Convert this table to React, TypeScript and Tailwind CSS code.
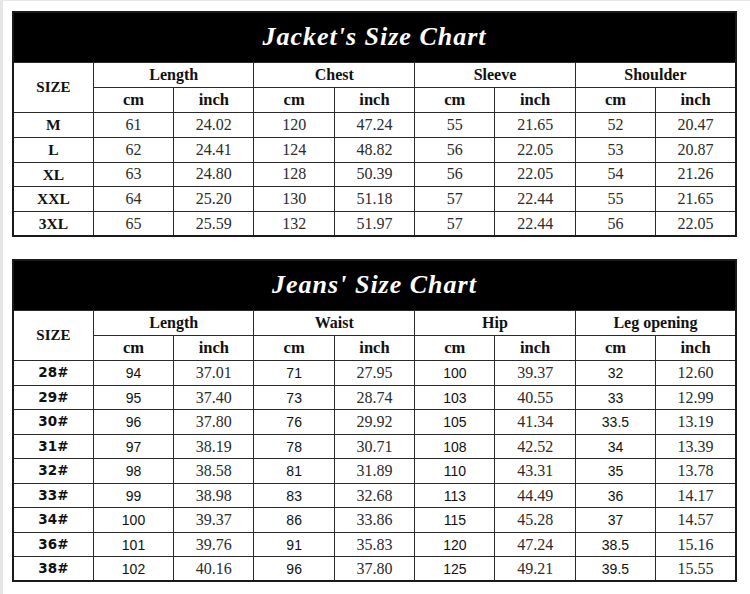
const jacketGroups = ["Length", "Chest", "Sleeve", "Shoulder"];
const jacketRows = [
  ["M", "61", "24.02", "120", "47.24", "55", "21.65", "52", "20.47"],
  ["L", "62", "24.41", "124", "48.82", "56", "22.05", "53", "20.87"],
  ["XL", "63", "24.80", "128", "50.39", "56", "22.05", "54", "21.26"],
  ["XXL", "64", "25.20", "130", "51.18", "57", "22.44", "55", "21.65"],
  ["3XL", "65", "25.59", "132", "51.97", "57", "22.44", "56", "22.05"],
];

const jeansGroups = ["Length", "Waist", "Hip", "Leg opening"];
const jeansRows = [
  ["28#", "94", "37.01", "71", "27.95", "100", "39.37", "32", "12.60"],
  ["29#", "95", "37.40", "73", "28.74", "103", "40.55", "33", "12.99"],
  ["30#", "96", "37.80", "76", "29.92", "105", "41.34", "33.5", "13.19"],
  ["31#", "97", "38.19", "78", "30.71", "108", "42.52", "34", "13.39"],
  ["32#", "98", "38.58", "81", "31.89", "110", "43.31", "35", "13.78"],
  ["33#", "99", "38.98", "83", "32.68", "113", "44.49", "36", "14.17"],
  ["34#", "100", "39.37", "86", "33.86", "115", "45.28", "37", "14.57"],
  ["36#", "101", "39.76", "91", "35.83", "120", "47.24", "38.5", "15.16"],
  ["38#", "102", "40.16", "96", "37.80", "125", "49.21", "39.5", "15.55"],
];

const serif = "font-['Liberation_Serif','Times_New_Roman',serif]";
const sans = "font-['DejaVu_Sans','Verdana',sans-serif]";
const sansNum = "font-['Liberation_Sans','Arial',sans-serif]";

function SizeChart({
  title,
  groups,
  rows,
  jeans,
}: {
  title: string;
  groups: string[];
  rows: string[][];
  jeans?: boolean;
}) {
  return (
    <table className="w-[725px] table-fixed border-collapse border-2 border-[#1a1a1a] bg-white">
      <thead>
        <tr className="h-[50px]">
          <th
            colSpan={9}
            className={`bg-black text-white ${serif} text-[26px] font-bold italic tracking-[1px] leading-none`}
          >
            {title}
          </th>
        </tr>
        <tr className="h-[25px]">
          <th
            rowSpan={2}
            className={`border border-[#2a2a2a] ${serif} text-[15px] font-bold text-[#111]`}
          >
            SIZE
          </th>
          {groups.map((g) => (
            <th
              key={g}
              colSpan={2}
              className={`border border-[#2a2a2a] ${serif} text-[16px] font-bold text-[#111]`}
            >
              {g}
            </th>
          ))}
        </tr>
        <tr className="h-[24px]">
          {groups.map((g) => (
            <>
              <th
                key={g + "cm"}
                className={`border border-[#2a2a2a] ${serif} text-[16.5px] font-bold text-[#111]`}
              >
                cm
              </th>
              <th
                key={g + "in"}
                className={`border border-[#2a2a2a] ${serif} text-[16.5px] font-bold text-[#111]`}
              >
                inch
              </th>
            </>
          ))}
        </tr>
      </thead>
      <tbody>
        {rows.map((r) => (
          <tr key={r[0]} className={jeans ? "h-[24.5px]" : "h-[24.7px]"}>
            {r.map((v, i) => {
              let cls = `${serif} text-[16px] text-[#2b2b2b]`;
              if (i === 0) {
                cls = jeans
                  ? `${sans} text-[13.5px] font-bold text-[#111]`
                  : `${serif} text-[15.5px] font-bold text-[#111]`;
              } else if (jeans && i % 2 === 1) {
                cls = `${sansNum} text-[14px] text-[#111]`;
              }
              return (
                <td
                  key={i}
                  className={`border border-[#2a2a2a] p-0 text-center leading-none ${cls}`}
                >
                  {v}
                </td>
              );
            })}
          </tr>
        ))}
      </tbody>
    </table>
  );
}

export default function App() {
  return (
    <div className="flex h-[594px] w-[750px] flex-col gap-[22px] overflow-hidden border-l-[3px] border-t border-[#e6e6e6] bg-white pl-[9px] pt-[10px]">
      <SizeChart title="Jacket's Size Chart" groups={jacketGroups} rows={jacketRows} />
      <SizeChart title="Jeans' Size Chart" groups={jeansGroups} rows={jeansRows} jeans />
    </div>
  );
}
